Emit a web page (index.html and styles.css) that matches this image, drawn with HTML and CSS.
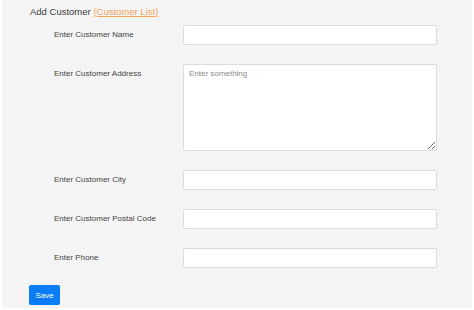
FILE: index.html
```html
<!DOCTYPE html>
<html>
<head>
<meta charset="utf-8">
<link rel="stylesheet" href="styles.css">
</head>
<body>
<div class="panel">
  <h1 class="title">Add Customer <a href="#" class="title-link">(Customer List)</a></h1>
  <form class="form">
    <div class="row">
      <label class="label">Enter Customer Name</label>
      <input class="field" type="text">
    </div>
    <div class="row">
      <label class="label">Enter Customer Address</label>
      <textarea class="field area" placeholder="Enter something"></textarea>
    </div>
    <div class="row">
      <label class="label">Enter Customer City</label>
      <input class="field" type="text">
    </div>
    <div class="row">
      <label class="label">Enter Customer Postal Code</label>
      <input class="field" type="text">
    </div>
    <div class="row">
      <label class="label">Enter Phone</label>
      <input class="field" type="text">
    </div>
  </form>
  <button class="save" type="button">Save</button>
</div>
</body>
</html>
```
FILE: styles.css
```css
html, body {
  margin: 0;
  padding: 0;
  background: #ffffff;
}
body {
  font-family: "Liberation Sans", Arial, Helvetica, sans-serif;
  color: #333333;
}
.panel {
  margin: 0 2px;
  height: 308px;
  box-sizing: border-box;
  background: #f4f4f4;
  border-radius: 0 0 3px 3px;
  padding: 5px 0 0 27px;
}
.title {
  margin: 0;
  font-size: 9.5px;
  font-weight: normal;
  line-height: 14px;
  color: #3a3a3a;
  padding-left: 1px;
}
.title-link {
  color: #f5a25a;
  text-decoration: underline;
}
.form {
  display: flex;
  flex-direction: column;
  gap: 19px;
  margin-top: 6px;
  padding-left: 24px;
}
.row {
  display: grid;
  grid-template-columns: 130px 254px;
  align-items: start;
}
.label {
  font-size: 8px;
  line-height: 20px;
  color: #444444;
  padding-left: 1px;
}
.field {
  box-sizing: border-box;
  width: 254px;
  height: 20px;
  margin: 0;
  border: 1px solid #dddddd;
  border-radius: 2px;
  background: #ffffff;
  font-family: inherit;
  font-size: 8px;
  padding: 4px 5px;
  outline: none;
}
.area {
  height: 87px;
  resize: both;
  display: block;
}
.area::placeholder {
  color: #8a8a8a;
}
.save {
  margin-top: 17px;
  width: 31px;
  height: 20px;
  padding: 0;
  border: none;
  border-radius: 2px;
  background: #0a7cf6;
  color: #ffffff;
  font-family: inherit;
  font-size: 8px;
  cursor: pointer;
}
```
